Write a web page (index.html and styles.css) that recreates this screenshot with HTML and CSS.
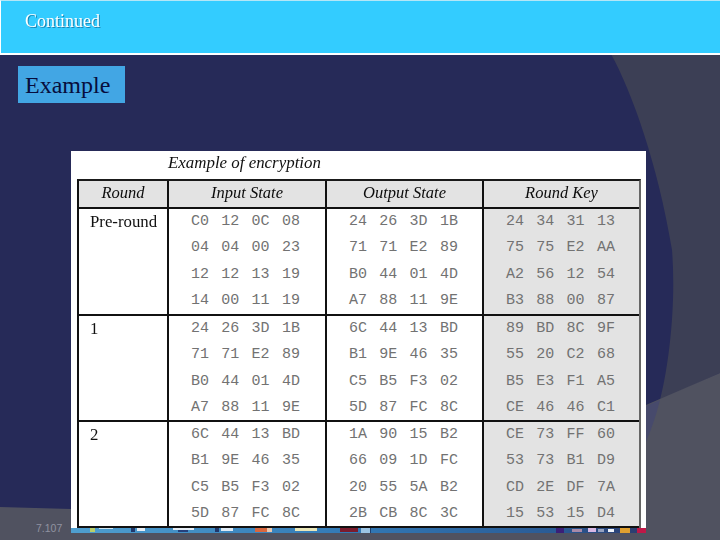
FILE: index.html
```html
<!DOCTYPE html>
<html lang="en">
<head>
<meta charset="utf-8">
<title>Continued</title>
<link rel="stylesheet" href="styles.css">
</head>
<body>
<div class="slide">
  <svg class="backdrop" viewBox="0 0 720 540" aria-hidden="true">
    <rect width="720" height="540" fill="#262a58"/>
    <path d="M611 54 C632 92 658 165 672 250 C676 300 670 360 660 400 L720 373 L720 54 Z" fill="#3c3f55"/>
    <path d="M0 507 L71 509 L646 405 L720 373 L720 540 L0 540 Z" fill="#505260"/>
    <path d="M646 406 L660 400 C656 416 651 430 646 442 Z" fill="#474a6c"/>
  </svg>

  <header class="title-bar"><h1 class="title">Continued</h1></header>

  <div class="tag">Example</div>

  <div class="lower">
    <div class="page-no">7.107</div>
    <figure class="figure">
      <figcaption class="caption">Example of encryption</figcaption>
      <div class="table">
        <div class="cell head">Round</div>
        <div class="cell head">Input State</div>
        <div class="cell head">Output State</div>
        <div class="cell head last">Round Key</div>

        <div class="cell label">Pre-round</div>
        <div class="cell hex">C0 12 0C 08<br>04 04 00 23<br>12 12 13 19<br>14 00 11 19</div>
        <div class="cell hex">24 26 3D 1B<br>71 71 E2 89<br>B0 44 01 4D<br>A7 88 11 9E</div>
        <div class="cell hex key last">24 34 31 13<br>75 75 E2 AA<br>A2 56 12 54<br>B3 88 00 87</div>

        <div class="cell label">1</div>
        <div class="cell hex">24 26 3D 1B<br>71 71 E2 89<br>B0 44 01 4D<br>A7 88 11 9E</div>
        <div class="cell hex">6C 44 13 BD<br>B1 9E 46 35<br>C5 B5 F3 02<br>5D 87 FC 8C</div>
        <div class="cell hex key last">89 BD 8C 9F<br>55 20 C2 68<br>B5 E3 F1 A5<br>CE 46 46 C1</div>

        <div class="cell label end">2</div>
        <div class="cell hex end">6C 44 13 BD<br>B1 9E 46 35<br>C5 B5 F3 02<br>5D 87 FC 8C</div>
        <div class="cell hex end">1A 90 15 B2<br>66 09 1D FC<br>20 55 5A B2<br>2B CB 8C 3C</div>
        <div class="cell hex key last end">CE 73 FF 60<br>53 73 B1 D9<br>CD 2E DF 7A<br>15 53 15 D4</div>
      </div>
    </figure>
  </div>
  <svg class="taskbar" viewBox="0 0 575 5" preserveAspectRatio="none" aria-hidden="true">
    <defs>
      <linearGradient id="bar" x1="0" x2="1" y1="0" y2="0">
        <stop offset="0" stop-color="#4f9fd0"/>
        <stop offset="0.5" stop-color="#3278b4"/>
        <stop offset="0.85" stop-color="#2a5a94"/>
        <stop offset="1" stop-color="#2c3a6c"/>
      </linearGradient>
    </defs>
    <rect width="575" height="5" fill="url(#bar)"/>
    <rect x="19" y="0" width="5" height="4" fill="#b9cf6a"/>
    <rect x="28" y="0" width="14" height="1" fill="#cfe6f2"/>
    <rect x="60" y="0" width="4" height="4" fill="#20386c"/>
    <rect x="66" y="0" width="8" height="3" fill="#e8eef4"/>
    <rect x="102" y="0" width="21" height="2" fill="#e6eef6"/>
    <rect x="107" y="2" width="10" height="2" fill="#24407c"/>
    <rect x="144" y="0" width="4" height="4" fill="#20386c"/>
    <rect x="150" y="0" width="12" height="3" fill="#dfeaf4"/>
    <rect x="184" y="0" width="12" height="4" fill="#d9673e"/>
    <rect x="196" y="0" width="5" height="4" fill="#e9c7ae"/>
    <rect x="224" y="0" width="22" height="3" fill="#e9e6b8"/>
    <rect x="269" y="0" width="18" height="4" fill="#7a1c2e"/>
    <rect x="290" y="0" width="9" height="5" fill="#9cc4e4"/>
    <rect x="299" y="0" width="1" height="5" fill="#1e4070"/>
    <rect x="485" y="0" width="8" height="5" fill="#3a1f78"/>
    <rect x="501" y="1" width="10" height="3" fill="#a88aa8"/>
    <rect x="517" y="0" width="8" height="4" fill="#d8b8e4"/>
    <rect x="527" y="1" width="6" height="3" fill="#96a2c0"/>
    <rect x="537" y="1" width="6" height="3" fill="#eef2f8"/>
    <rect x="549" y="0" width="10" height="5" fill="#e0a030"/>
    <rect x="566" y="0" width="9" height="5" fill="#c01848"/>
  </svg>
</div>
</body>
</html>
```
FILE: styles.css
```css
html, body {
  margin: 0;
  padding: 0;
}

.slide {
  position: relative;
  width: 720px;
  height: 540px;
  overflow: hidden;
  font-family: "Liberation Serif", "Times New Roman", serif;
}

.backdrop {
  position: absolute;
  inset: 0;
  width: 720px;
  height: 540px;
}

.title-bar {
  position: relative;
  box-sizing: border-box;
  height: 55px;
  background: #33ccff;
  border-top: 1px solid #b4e6f6;
  border-left: 1px solid #ffffff;
  border-bottom: 2px solid #ffffff;
  padding: 10px 0 0 24px;
}

.title {
  margin: 0;
  font-size: 18px;
  line-height: 20px;
  font-weight: 400;
  color: #ffffff;
  text-shadow: 1px 1px 0 rgba(0, 60, 100, 0.5);
  filter: blur(0.3px);
}

.tag {
  position: relative;
  box-sizing: border-box;
  width: 107px;
  height: 37px;
  margin: 11px 0 0 18px;
  padding-left: 7px;
  background: #42a6e4;
  color: #070d3c;
  font-size: 24px;
  line-height: 38px;
}

.lower {
  position: relative;
  display: flex;
  margin-top: 48px;
}

.page-no {
  box-sizing: border-box;
  width: 71px;
  height: 384px;
  padding: 0 0 0 36px;
  display: flex;
  align-items: flex-end;
  font-family: "Liberation Sans", Arial, sans-serif;
  font-size: 10.5px;
  line-height: 13px;
  color: #9092a0;
  white-space: nowrap;
}

.figure {
  box-sizing: border-box;
  width: 575px;
  height: 377px;
  margin: 0;
  padding-left: 6px;
  background: #ffffff;
}

.caption {
  height: 28px;
  padding-left: 91px;
  font-size: 16.9px;
  line-height: 24px;
  font-style: italic;
  color: #111111;
  filter: blur(0.3px);
}

.table {
  box-sizing: border-box;
  display: grid;
  grid-template-columns: 90px 158px 157px 155px;
  grid-template-rows: 28px 107px 106px 106px;
  width: 564px;
  border-top: 2px solid #1a1a1a;
  border-left: 2px solid #111111;
  border-right: 2px solid #666666;
}

.cell {
  box-sizing: border-box;
  border-right: 2px solid #111111;
  border-bottom: 2px solid #111111;
}

.cell.last {
  border-right: 0;
}

.head {
  background: #e3e3e3;
  font-style: italic;
  font-size: 16.5px;
  line-height: 24px;
  text-align: center;
  color: #0c0c0c;
  filter: blur(0.25px);
}

.label {
  padding-left: 11px;
  font-size: 16.8px;
  line-height: 26px;
  color: #111111;
  filter: blur(0.25px);
}

.hex {
  padding-left: 22px;
  font-family: "Liberation Mono", "Courier New", monospace;
  font-size: 15px;
  line-height: 26.3px;
  word-spacing: 3.3px;
  color: #727272;
  white-space: nowrap;
}

.key {
  background: #e3e3e3;
}

.taskbar {
  position: absolute;
  left: 71px;
  top: 528px;
  width: 575px;
  height: 5px;
  filter: blur(0.4px);
}
```
